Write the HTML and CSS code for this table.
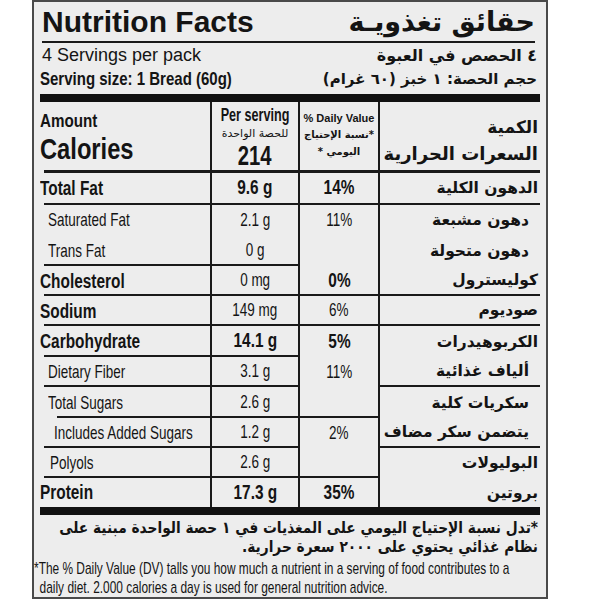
FILE: index.html
```html
<!DOCTYPE html>
<html lang="en">
<head>
<meta charset="utf-8">
<title>Nutrition Facts</title>
<link rel="stylesheet" href="styles.css">
</head>
<body>
<div class="label">
  <div class="title-row">
    <span class="title">Nutrition Facts</span>
    <span class="ar title-ar">حقائق تغذويـة</span>
  </div>
  <div class="info-row">
    <span class="servings">4 Servings per pack</span>
    <span class="ar info-ar">٤ الحصص في العبوة</span>
  </div>
  <div class="info-row">
    <span class="n nb size">Serving size: 1 Bread (60g)</span>
    <span class="ar info-ar2">حجم الحصة: ١ خبز (٦٠ غرام)</span>
  </div>
  <div class="bar"></div>

  <div class="table">
    <div class="row head">
      <div class="c c1 hl">
        <span class="n nb amount">Amount</span>
        <span class="n nb calories">Calories</span>
      </div>
      <div class="c c2 hl">
        <span class="n nb nc per">Per serving</span>
        <span class="ar per-ar">للحصة الواحدة</span>
        <span class="n nb nc kcal">214</span>
      </div>
      <div class="c c3 hl">
        <span class="dv">% Daily Value</span>
        <span class="ar dv-ar">*نسبة الإحتياج<br>اليومي *</span>
      </div>
      <div class="c c4 hl">
        <span class="ar amount-ar">الكمية</span>
        <span class="ar cal-ar">السعرات الحرارية</span>
      </div>
    </div>

    <div class="row h33">
      <div class="c c1 ln"><span class="n nb lb">Total Fat</span></div>
      <div class="c c2 ln"><span class="n nb nc vb">9.6 g</span></div>
      <div class="c c3 ln"><span class="n nb nc vb">14%</span></div>
      <div class="c c4 ln"><span class="ar ab">الدهون الكلية</span></div>
    </div>
    <div class="row h30">
      <div class="c c1"><span class="n ls">Saturated Fat</span></div>
      <div class="c c2"><span class="n nc vs">2.1 g</span></div>
      <div class="c c3"><span class="n nc vs">11%</span></div>
      <div class="c c4"><span class="ar as">دهون مشبعة</span></div>
    </div>
    <div class="row h31">
      <div class="c c1 ln"><span class="n ls">Trans Fat</span></div>
      <div class="c c2 ln"><span class="n nc vs">0 g</span></div>
      <div class="c c3"></div>
      <div class="c c4"><span class="ar as">دهون متحولة</span></div>
    </div>
    <div class="row h30">
      <div class="c c1 ln"><span class="n nb lb">Cholesterol</span></div>
      <div class="c c2 ln"><span class="n nc vs">0 mg</span></div>
      <div class="c c3 ln"><span class="n nb nc vb">0%</span></div>
      <div class="c c4 ln"><span class="ar ab">كوليسترول</span></div>
    </div>
    <div class="row h30">
      <div class="c c1 ln"><span class="n nb lb">Sodium</span></div>
      <div class="c c2 ln"><span class="n nc vs">149 mg</span></div>
      <div class="c c3 ln"><span class="n nc vs">6%</span></div>
      <div class="c c4 ln"><span class="ar ab">صوديوم</span></div>
    </div>
    <div class="row h31">
      <div class="c c1 ln"><span class="n nb lb">Carbohydrate</span></div>
      <div class="c c2 ln"><span class="n nb nc vb">14.1 g</span></div>
      <div class="c c3"><span class="n nb nc vb">5%</span></div>
      <div class="c c4"><span class="ar ab">الكربوهيدرات</span></div>
    </div>
    <div class="row h30">
      <div class="c c1 ln"><span class="n ls">Dietary Fiber</span></div>
      <div class="c c2 ln"><span class="n nc vs">3.1 g</span></div>
      <div class="c c3"><span class="n nc vs">11%</span></div>
      <div class="c c4 ln"><span class="ar as">ألياف غذائية</span></div>
    </div>
    <div class="row h31">
      <div class="c c1 ln in2"><span class="n ls">Total Sugars</span></div>
      <div class="c c2 ln"><span class="n nc vs">2.6 g</span></div>
      <div class="c c3 ln"></div>
      <div class="c c4"><span class="ar as">سكريات كلية</span></div>
    </div>
    <div class="row h30">
      <div class="c c1 ln"><span class="n ls l2">Includes Added Sugars</span></div>
      <div class="c c2 ln"><span class="n nc vs">1.2 g</span></div>
      <div class="c c3"><span class="n nc vs">2%</span></div>
      <div class="c c4 ln"><span class="ar as">يتضمن سكر مضاف</span></div>
    </div>
    <div class="row h30">
      <div class="c c1 ln"><span class="n ls l3">Polyols</span></div>
      <div class="c c2 ln"><span class="n nc vs">2.6 g</span></div>
      <div class="c c3 ln"></div>
      <div class="c c4"><span class="ar ab">البوليولات</span></div>
    </div>
    <div class="row h29">
      <div class="c c1"><span class="n nb lb">Protein</span></div>
      <div class="c c2"><span class="n nb nc vb">17.3 g</span></div>
      <div class="c c3"><span class="n nb nc vb">35%</span></div>
      <div class="c c4"><span class="ar ab">بروتين</span></div>
    </div>
  </div>
  <div class="bar bar2"></div>

  <p class="ar foot-ar">*تدل نسبة الإحتياج اليومي على المغذيات في ١ حصة الواحدة مبنية على<br>نظام غذائي يحتوي على ٢٠٠٠ سعرة حرارية.</p>
  <p class="foot-en">*The % Daily Value (DV) talls you how much a nutrient in a serving of food contributes to a<br>daily diet. 2.000 calories a day is used for general nutrition advice.</p>
</div>
</body>
</html>
```
FILE: styles.css
```css
* { box-sizing: border-box; }

html, body {
  margin: 0;
  padding: 0;
  background: #ffffff;
}

body {
  font-family: "Liberation Sans", Arial, sans-serif;
  color: #141414;
}

.label {
  margin-left: 32px;
  width: 516px;
  height: 599px;
  background: #ededed;
  border: 2px solid #4a4a4a;
  padding: 0 6px;
  overflow: hidden;
}

.ar {
  font-family: "DejaVu Sans", sans-serif;
  direction: rtl;
  font-weight: bold;
  white-space: nowrap;
}

/* condensed text */
.n {
  display: inline-block;
  white-space: nowrap;
  transform: scaleX(0.71);
  transform-origin: left center;
}
.nb {
  font-weight: bold;
  transform: scaleX(0.77);
}
.nc { transform-origin: center center; }

.title-row {
  display: flex;
  justify-content: space-between;
  align-items: flex-end;
  margin: 0 5px 0 2px;
  height: 41px;
  border-bottom: 2px solid #1a1a1a;
  padding-bottom: 2px;
}

.title {
  font-weight: bold;
  font-size: 30px;
  line-height: 34px;
}

.title-ar {
  font-size: 27px;
  line-height: 34px;
}

.info-row {
  display: flex;
  justify-content: space-between;
  align-items: center;
  margin: 0 3px 0 2px;
  height: 24px;
}

.servings { font-size: 18px; }

.size {
  font-size: 19px;
  margin-left: -2px;
  transform: scaleX(0.79);
}

.info-ar { font-size: 16px; }
.info-ar2 { font-size: 15px; }

.bar {
  height: 8px;
  background: #111;
  margin-top: 3px;
}
.bar2 { margin-top: 0; }

.table {
  display: flex;
  flex-direction: column;
}

.row {
  display: grid;
  grid-template-columns: 172px 88px 80px 1fr;
}

.head { height: 70px; }
.h33 { height: 33px; }
.h31 { height: 31px; }
.h30 { height: 30px; }
.h29 { height: 29px; }

.c {
  display: flex;
  align-items: center;
  min-width: 0;
}

.c1, .c2, .c3 { border-right: 2px solid #1a1a1a; }
.c2, .c3 { justify-content: center; }
.c4 { justify-content: flex-end; padding-right: 2px; }

.ln { border-bottom: 2px solid #1a1a1a; }
.hl { border-bottom: 3px solid #1a1a1a; }

.c1.ln, .c1.hl {
  border-bottom: none;
  background: linear-gradient(#1a1a1a, #1a1a1a) right bottom / calc(100% - 4px) 2px no-repeat;
}
.c1.hl { background-size: calc(100% - 4px) 3px; }
.c1.in2 { background-size: calc(100% - 17px) 2px; }

/* header */
.head .c1 {
  flex-direction: column;
  align-items: flex-start;
  justify-content: flex-start;
  padding-top: 8px;
}

.amount {
  font-size: 19px;
  line-height: 22px;
  transform: scaleX(0.8);
}

.calories {
  font-size: 30px;
  line-height: 34px;
  transform: scaleX(0.79);
}

.head .c2 {
  flex-direction: column;
  justify-content: flex-start;
  align-items: center;
  padding-top: 3px;
}

.per {
  font-size: 18px;
  line-height: 20px;
  transform: scaleX(0.7);
}

.per-ar {
  font-size: 11px;
  line-height: 17px;
  font-weight: normal;
}

.kcal {
  font-size: 27px;
  line-height: 28px;
  transform: scaleX(0.75);
}

.head .c3 {
  flex-direction: column;
  justify-content: flex-start;
  align-items: center;
  padding-top: 9px;
}

.dv {
  font-weight: bold;
  font-size: 11px;
  line-height: 15px;
  white-space: nowrap;
}

.dv-ar {
  font-size: 10px;
  line-height: 17px;
  text-align: center;
}

.head .c4 {
  flex-direction: column;
  justify-content: flex-start;
  align-items: flex-end;
  padding-top: 13px;
}

.amount-ar {
  font-size: 17px;
  line-height: 25px;
}

.cal-ar {
  font-size: 18px;
  line-height: 28px;
}

/* rows */
.lb { font-size: 20px; }

.ls {
  font-size: 19px;
  margin-left: 8px;
}
.l2 { margin-left: 14px; }
.l3 { margin-left: 10px; }

.vb { font-size: 20px; }
.vs { font-size: 19px; }

.ab { font-size: 15.5px; }
.as {
  font-size: 15.5px;
  padding-right: 9px;
}

/* footer */
.foot-ar {
  margin: 3px 2px 0 -78px;
  width: 576px;
  font-size: 16px;
  line-height: 19px;
  text-align: right;
  transform: scaleX(0.86);
  transform-origin: right top;
}

.foot-en {
  margin: 3px 0 0 -6px;
  width: 723px;
  font-size: 17px;
  line-height: 19px;
  white-space: nowrap;
  padding-left: 8px;
  text-indent: -8px;
  transform: scaleX(0.7);
  transform-origin: left top;
}
```
